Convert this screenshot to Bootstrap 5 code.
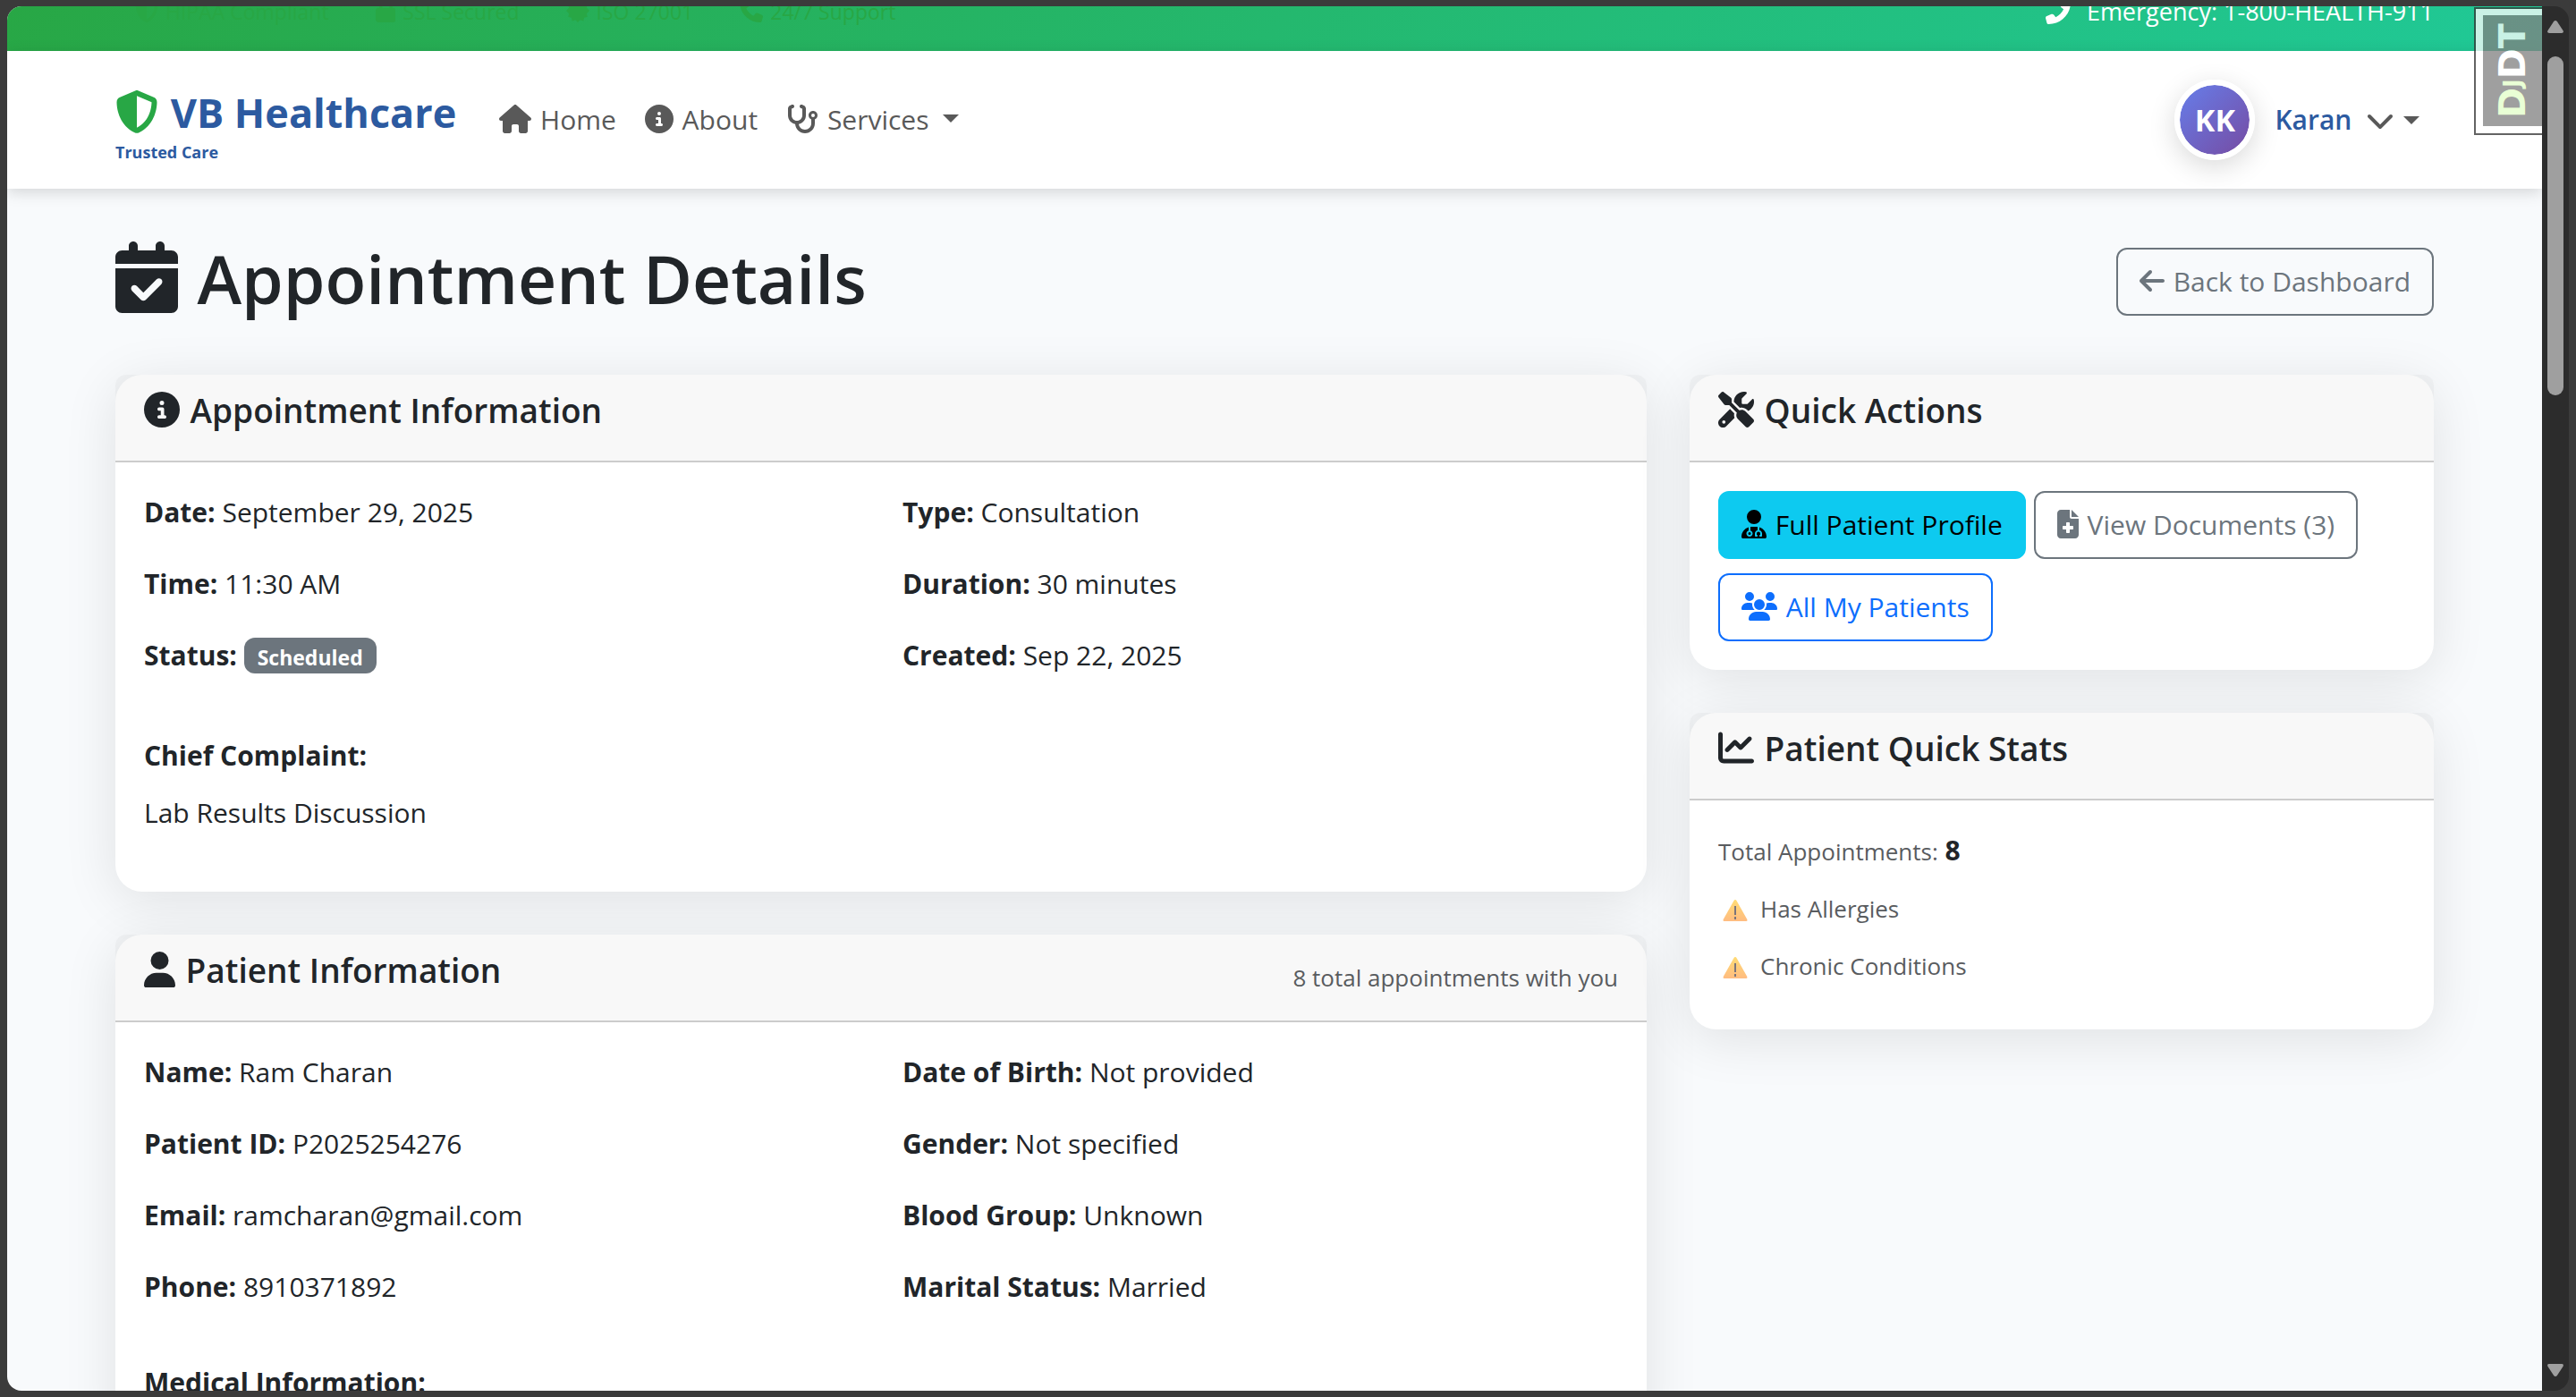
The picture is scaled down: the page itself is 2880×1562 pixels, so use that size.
<!DOCTYPE html>
<html lang="en">
<head>
<meta charset="utf-8">
<meta name="viewport" content="width=device-width, initial-scale=1">
<title>Appointment Details - VB Healthcare</title>
<link href="https://cdn.jsdelivr.net/npm/bootstrap@5.3.0/dist/css/bootstrap.min.css" rel="stylesheet">
<script src="https://cdn.jsdelivr.net/npm/bootstrap@5.3.0/dist/js/bootstrap.bundle.min.js" defer></script>
<style>
  :root { font-size: 32px; --brand-blue: #2c5aa0; --brand-green: #28a745; }
  body {
    --bs-body-font-family: "Open Sans", "Noto Sans", sans-serif;
    --bs-body-font-size: 30px;
    --bs-body-line-height: 48px;
    background: #3b3b3b;
  }
  .viewer { height: 100vh; padding: 7px 8px; }
  .page-pane { background: #f8fafc; border-radius: 16px 0 0 16px; min-width: 0; }
  .page-box { width: 100%; max-width: 2640px; margin: 0 auto; padding: 0 24px; }

  /* icons */
  .ico { fill: currentColor; flex: none; height: 32px; vertical-align: -4px; margin-right: 2px; }
  .ico-sm { height: 26px; vertical-align: -3px; }
  .ico-md { height: 28px; vertical-align: -4px; }
  .ico-lg { height: 40px; vertical-align: -5px; }
  .ico-brand { height: 48px; vertical-align: -6px; color: var(--brand-green); }
  .ico-xl { height: 80px; vertical-align: -10px; }

  /* top strip, scrolled half out of view */
  .top-strip { height: 50px; background: linear-gradient(135deg, #28a745 0%, #20c997 100%); overflow: hidden; }
  .trust-list { font-size: 23px; line-height: 40px; color: var(--brand-green); gap: 52px; padding: 0 22px 24px; }
  .emergency { font-size: 27px; line-height: 42px; padding-bottom: 23px; gap: 16px; }

  /* navigation */
  .site-nav { min-height: 154px; padding: 0; background: #fff; box-shadow: 0 4px 16px rgba(0,0,0,.15); z-index: 2; position: relative; }
  .site-nav .navbar-brand { color: var(--brand-blue); font-weight: 700; font-size: 45px; line-height: 72px; padding: 0; }
  .brand-sub { font-size: 18px; line-height: 16px; font-weight: 700; }
  .site-nav .nav-link { color: #595959; padding: 16px; font-size: 30px; }
  .avatar { width: 90px; height: 90px; border: 6px solid #fff; border-radius: 50%; color: #fff; font-weight: 700; font-size: 34px;
    background: linear-gradient(135deg, #667eea 0%, #764ba2 100%) padding-box; box-shadow: 0 8px 30px rgba(0,0,0,.15); }
  .user-name { color: var(--brand-blue); font-weight: 600; margin: 0 16px 0 22px; }

  /* headings */
  h1 { font-size: 75px; line-height: 104px; margin-bottom: 8px; }
  h5 { font-size: 37px; line-height: 48px; margin-bottom: 16px; }
  h1, h5 { font-weight: 600; }
  h6 { font-size: 30px; line-height: 38px; font-weight: 700; }

  /* cards */
  .card { --bs-card-border-radius: 30px; --bs-card-inner-border-radius: 12px; border: 0; margin-bottom: 48px; box-shadow: 0 10px 60px rgba(0,0,0,.1); }
  .card-header { border-bottom: 2px solid rgba(0,0,0,.175); }
  .card p { margin-bottom: 32px; }
  .badge { font-size: 23px; line-height: 24px; padding: 10px 15px 6px; border-radius: 12px; }
  .small-note { font-size: 26px; line-height: 42px; color: #595c5f; }
  .stats p { margin-bottom: 16px; }
  .warn-ico { width: 28px; height: 26px; margin: 0 14px 0 5px; vertical-align: -5px; opacity: .75; }
  .btn { --bs-btn-font-size: 30px; --bs-btn-line-height: 48px; --bs-btn-border-width: 2px; --bs-btn-border-radius: 12px; --bs-btn-padding-y: 12px; --bs-btn-padding-x: 24px; }
  .actions { gap: 16px 9px; }

  /* debug toolbar handle */
  .debug-handle { position: absolute; top: 1px; right: 0; z-index: 3; width: 76px; height: 143px; opacity: .76;
    border: 2px solid #333; border-right: 0; background: #fff; padding: 7px 0 8px 8px; }
  .debug-label { background: #818181; color: #fff; width: 100%; height: 100%; writing-mode: vertical-rl; transform: rotate(180deg);
    font: 700 41px/1 "DejaVu Sans", sans-serif; text-decoration: none; }
  .debug-label span { color: #e3ffc8; }
  .debug-label small { font-size: 26px; }

  /* scrollbar */
  .scroll-track { width: 30px; background: #2c2c2c; border-radius: 0 16px 16px 0; padding: 16px 6px; }
  .scroll-track svg { width: 18px; height: 14px; fill: #9f9f9f; }
  .scroll-thumb { height: 25%; margin: 26px 0 auto; border-radius: 9px; background: #9f9f9f; }
</style>
</head>
<body>
<div class="viewer d-flex">
  <div class="page-pane flex-grow-1 position-relative overflow-hidden">

    <div class="top-strip">
      <div class="page-box h-100 d-flex justify-content-between align-items-end">
        <div class="trust-list d-flex">
          <span><svg class="ico ico-sm" viewBox="0 0 512 512"><path d="M256 0c4.600 0 9.200 1 13.400 2.900L457.700 82.800c22 9.300 38.400 31 38.300 57.200c-.5 99.200-41.300 280.700-213.600 363.200c-16.700 8-36.100 8-52.800 0C57.300 420.700 16.500 239.200 16 140c-.1-26.200 16.300-47.900 38.300-57.200L242.700 2.900C246.800 1 251.400 0 256 0zm0 66.800V444.800C394 378 431.100 230.100 432 141.400L256 66.800z"/></svg> HIPAA Compliant</span>
          <span><svg class="ico ico-sm" viewBox="0 0 448 512"><path d="M144 144v48H304V144c0-44.200-35.800-80-80-80s-80 35.800-80 80zM80 192V144C80 64.500 144.500 0 224 0s144 64.500 144 144v48h16c35.300 0 64 28.700 64 64V448c0 35.300-28.700 64-64 64H64c-35.300 0-64-28.700-64-64V256c0-35.300 28.700-64 64-64H80z"/></svg> SSL Secured</span>
          <span><svg class="ico ico-sm" viewBox="0 0 512 512"><path d="M256 0l52 52 71-20 18 72 72 18-20 71 63 63-63 63 20 71-72 18-18 72-71-20-52 52-52-52-71 20-18-72-72-18 20-71L0 256l63-63-20-71 72-18 18-72 71 20z"/></svg> ISO 27001</span>
          <span><svg class="ico ico-sm" viewBox="0 0 512 512"><path d="M164.900 24.600c-7.700-18.600-28-28.500-47.400-23.200l-88 24C12.100 30.200 0 46 0 64C0 311.400 200.600 512 448 512c18 0 33.800-12.100 38.600-29.500l24-88c5.300-19.400-4.600-39.700-23.200-47.400l-96-40c-16.300-6.800-35.200-2.100-46.300 11.600L304.700 368C234.300 334.700 177.300 277.700 144 207.300L193.300 167c13.700-11.200 18.400-30 11.600-46.300l-40-96z"/></svg> 24/7 Support</span>
        </div>
        <div class="emergency d-flex align-items-center text-white">
          <svg class="ico ico-md" viewBox="0 0 512 512"><path transform="matrix(-1 0 0 1 512 0)" d="M164.900 24.600c-7.700-18.600-28-28.500-47.400-23.200l-88 24C12.100 30.200 0 46 0 64C0 311.400 200.600 512 448 512c18 0 33.800-12.100 38.600-29.500l24-88c5.300-19.400-4.600-39.700-23.200-47.400l-96-40c-16.300-6.800-35.200-2.100-46.300 11.600L304.700 368C234.300 334.700 177.300 277.700 144 207.300L193.300 167c13.700-11.200 18.400-30 11.600-46.300l-40-96z"/></svg>
          <span>Emergency: 1-800-HEALTH-911</span>
        </div>
      </div>
    </div>

    <nav class="navbar navbar-expand site-nav">
      <div class="page-box d-flex align-items-center">
        <a class="navbar-brand" href="#">
          <svg class="ico ico-brand" viewBox="0 0 512 512"><path d="M256 0c4.600 0 9.200 1 13.400 2.900L457.700 82.800c22 9.300 38.400 31 38.300 57.200c-.5 99.200-41.300 280.700-213.600 363.200c-16.700 8-36.100 8-52.800 0C57.300 420.700 16.500 239.200 16 140c-.1-26.200 16.300-47.900 38.300-57.200L242.700 2.900C246.800 1 251.400 0 256 0zm0 66.800V444.800C394 378 431.100 230.100 432 141.400L256 66.800z"/></svg> VB Healthcare
          <div class="brand-sub">Trusted Care</div>
        </a>
        <ul class="navbar-nav me-auto">
          <li class="nav-item"><a class="nav-link" href="#"><svg class="ico" viewBox="0 0 576 512"><path d="M575.800 255.500c0 18-15 32.100-32 32.100h-32l.7 160.200c0 2.700-.2 5.400-.5 8.100V472c0 22.100-17.900 40-40 40H392c-22.100 0-40-17.900-40-40V384c0-17.700-14.300-32-32-32H256c-17.700 0-32 14.300-32 32v88c0 22.100-17.900 40-40 40H104c-22.100 0-40-17.900-40-40V287.600H32c-18 0-32-14-32-32.100c0-9 3-17 10-24L266.400 8c7-7 15-8 22-8s15 2 21 7L564.800 231.500c8 7 12 15 11 24z"/></svg> Home</a></li>
          <li class="nav-item"><a class="nav-link" href="#"><svg class="ico" viewBox="0 0 512 512"><path d="M256 512A256 256 0 1 0 256 0a256 256 0 1 0 0 512zM216 336h24V272H216c-13.300 0-24-10.700-24-24s10.700-24 24-24h48c13.300 0 24 10.700 24 24v88h8c13.300 0 24 10.700 24 24s-10.700 24-24 24H216c-13.300 0-24-10.700-24-24s10.700-24 24-24zm40-208a32 32 0 1 1 0 64 32 32 0 1 1 0-64z"/></svg> About</a></li>
          <li class="nav-item dropdown"><a class="nav-link dropdown-toggle" href="#" role="button" data-bs-toggle="dropdown"><svg class="ico" viewBox="0 0 576 512"><path d="M142.400 21.900c5.600 16.800-3.500 34.900-20.200 40.500L96 71.100V192c0 53 43 96 96 96s96-43 96-96V71.100l-26.100-8.700c-16.800-5.600-25.800-23.700-20.200-40.500s23.700-25.800 40.500-20.200l26.100 8.700C334.400 19.100 352 43.500 352 71.100V192c0 77.200-54.600 141.600-127.300 156.700C231 404.600 278.400 448 336 448c61.900 0 112-50.100 112-112V265.300c-28.300-12.300-48-40.500-48-73.300c0-44.200 35.800-80 80-80s80 35.800 80 80c0 32.800-19.700 61-48 73.300V336c0 97.200-78.800 176-176 176c-92.900 0-168.900-71.900-175.500-163.100C87.200 334.200 32 269.600 32 192V71.100c0-27.500 17.600-52 43.800-60.700l26.100-8.700c16.800-5.600 34.900 3.500 40.500 20.200zM480 224a32 32 0 1 0 0-64 32 32 0 1 0 0 64z"/></svg> Services </a></li>
        </ul>
        <a class="nav-link dropdown-toggle d-flex align-items-center" href="#" role="button" data-bs-toggle="dropdown">
          <span class="avatar d-flex align-items-center justify-content-center">KK</span>
          <span class="user-name">Karan</span>
          <svg class="ico" viewBox="0 0 512 512"><path d="M233.400 406.600c12.500 12.500 32.800 12.500 45.300 0l192-192c12.500-12.500 12.500-32.800 0-45.300s-32.800-12.500-45.300 0L256 338.700 86.600 169.400c-12.500-12.500-32.800-12.500-45.300 0s-12.500 32.800 0 45.300l192 192z"/></svg>
        </a>
      </div>
    </nav>

    <main class="page-box mt-4">
      <div class="d-flex justify-content-between align-items-center mb-4">
        <h1><svg class="ico ico-xl" viewBox="0 0 448 512"><path d="M128 0c17.700 0 32 14.300 32 32V64H288V32c0-17.700 14.300-32 32-32s32 14.300 32 32V64h48c26.500 0 48 21.500 48 48v48H0V112C0 85.500 21.500 64 48 64H96V32c0-17.700 14.300-32 32-32zM0 192H448V464c0 26.500-21.500 48-48 48H48c-26.500 0-48-21.500-48-48V192zM329 305c9.400-9.400 9.400-24.600 0-33.900s-24.600-9.400-33.900 0l-95 95-47-47c-9.400-9.400-24.600-9.400-33.900 0s-9.400 24.600 0 33.900l64 64c9.400 9.400 24.600 9.400 33.900 0L329 305z"/></svg> Appointment Details</h1>
        <a class="btn btn-outline-secondary" href="#"><svg class="ico" viewBox="0 0 448 512"><path d="M9.400 233.400c-12.500 12.500-12.500 32.800 0 45.300l160 160c12.500 12.500 32.800 12.500 45.300 0s12.500-32.800 0-45.300L109.200 288 416 288c17.700 0 32-14.300 32-32s-14.300-32-32-32l-306.700 0L214.600 118.600c12.500-12.500 12.500-32.800 0-45.300s-32.800-12.500-45.300 0l-160 160z"/></svg> Back to Dashboard</a>
      </div>

      <div class="row">
        <div class="col-8">
          <section class="card">
            <div class="card-header">
              <h5><svg class="ico ico-lg" viewBox="0 0 512 512"><path d="M256 512A256 256 0 1 0 256 0a256 256 0 1 0 0 512zM216 336h24V272H216c-13.300 0-24-10.700-24-24s10.700-24 24-24h48c13.300 0 24 10.700 24 24v88h8c13.300 0 24 10.700 24 24s-10.700 24-24 24H216c-13.300 0-24-10.700-24-24s10.700-24 24-24zm40-208a32 32 0 1 1 0 64 32 32 0 1 1 0-64z"/></svg> Appointment Information</h5>
            </div>
            <div class="card-body">
              <div class="row">
                <div class="col-6">
                  <p><strong>Date:</strong> September 29, 2025</p>
                  <p><strong>Time:</strong> 11:30 AM</p>
                  <p><strong>Status:</strong> <span class="badge bg-secondary">Scheduled</span></p>
                </div>
                <div class="col-6">
                  <p><strong>Type:</strong> Consultation</p>
                  <p><strong>Duration:</strong> 30 minutes</p>
                  <p><strong>Created:</strong> Sep 22, 2025</p>
                </div>
              </div>
              <div class="mt-3">
                <strong>Chief Complaint:</strong>
                <p class="mt-2">Lab Results Discussion</p>
              </div>
            </div>
          </section>

          <section class="card">
            <div class="card-header d-flex justify-content-between align-items-center">
              <h5><svg class="ico ico-lg" viewBox="0 0 448 512"><path d="M224 256A128 128 0 1 0 224 0a128 128 0 1 0 0 256zm-45.700 48C79.800 304 0 383.800 0 482.300C0 498.700 13.300 512 29.700 512H418.300c16.400 0 29.700-13.300 29.700-29.700C448 383.800 368.200 304 269.700 304H178.300z"/></svg> Patient Information</h5>
              <span class="small-note">8 total appointments with you</span>
            </div>
            <div class="card-body">
              <div class="row">
                <div class="col-6">
                  <p><strong>Name:</strong> Ram Charan</p>
                  <p><strong>Patient ID:</strong> P2025254276</p>
                  <p><strong>Email:</strong> ramcharan@gmail.com</p>
                  <p><strong>Phone:</strong> 8910371892</p>
                </div>
                <div class="col-6">
                  <p><strong>Date of Birth:</strong> Not provided</p>
                  <p><strong>Gender:</strong> Not specified</p>
                  <p><strong>Blood Group:</strong> Unknown</p>
                  <p><strong>Marital Status:</strong> Married</p>
                </div>
              </div>
              <h6 class="mt-3">Medical Information:</h6>
            </div>
          </section>
        </div>

        <div class="col-4">
          <section class="card">
            <div class="card-header">
              <h5><svg class="ico ico-lg" viewBox="0 0 512 512"><path d="M78.600 5C69.100-2.400 55.600-1.500 47 7L7 47c-8.500 8.500-9.400 22-2.100 31.600l80 104c4.500 5.900 11.600 9.400 19 9.400h54.100l109 109c-14.700 29-10 65.400 14.300 89.600l112 112c12.500 12.500 32.800 12.500 45.300 0l64-64c12.500-12.500 12.500-32.800 0-45.300l-112-112c-24.200-24.200-60.600-29-89.600-14.300l-109-109V104c0-7.500-3.500-14.500-9.400-19L78.600 5zM19.900 396.100C7.200 408.800 0 426.100 0 444.100C0 481.600 30.400 512 67.900 512c18 0 35.300-7.200 48-19.900L233.700 374.300c-7.800-20.900-9-43.600-3.600-65.100l-61.700-61.700L19.900 396.100zM512 144c0-10.500-1.100-20.700-3.200-30.500c-2.400-11.200-16.100-14.100-24.200-6l-63.900 63.900c-3 3-7.100 4.700-11.300 4.700H352c-8.800 0-16-7.200-16-16V102.600c0-4.200 1.700-8.300 4.700-11.300l63.900-63.900c8.100-8.100 5.200-21.800-6-24.200C388.700 1.100 378.500 0 368 0C288.500 0 224 64.500 224 144l0 .8 85.300 85.300c36-9.100 75.800 .5 104 28.700L429 274.500c49-23 83-72.800 83-130.500zM56 432a24 24 0 1 1 48 0 24 24 0 1 1 -48 0z"/></svg> Quick Actions</h5>
            </div>
            <div class="card-body actions d-flex flex-wrap">
              <a class="btn btn-info" href="#"><svg class="ico" viewBox="0 0 448 512"><path d="M224 256A128 128 0 1 0 224 0a128 128 0 1 0 0 256zm-96 55.200C54 332.900 0 401.300 0 482.300C0 498.700 13.300 512 29.700 512H418.300c16.400 0 29.700-13.300 29.700-29.700c0-81-54-149.400-128-171.100V362c27.600 7.100 48 32.200 48 62v40c0 8.800-7.200 16-16 16H336c-8.800 0-16-7.200-16-16s7.200-16 16-16V424c0-17.700-14.300-32-32-32s-32 14.300-32 32v24c8.800 0 16 7.200 16 16s-7.200 16-16 16H256c-8.800 0-16-7.200-16-16V424c0-29.800 20.400-54.900 48-62V304.900c-6-.6-12.100-.9-18.300-.9H178.300c-6.200 0-12.300 .3-18.300 .9v65.400c23.100 6.900 40 28.300 40 53.700c0 30.900-25.100 56-56 56s-56-25.100-56-56c0-25.400 16.900-46.800 40-53.700V311.200zM144 448a24 24 0 1 0 0-48 24 24 0 1 0 0 48z"/></svg> Full Patient Profile</a>
              <a class="btn btn-outline-secondary" href="#"><svg class="ico" viewBox="0 0 384 512"><path d="M64 0C28.700 0 0 28.700 0 64V448c0 35.300 28.700 64 64 64H320c35.300 0 64-28.700 64-64V160H256c-17.700 0-32-14.300-32-32V0H64zM256 0V128H384L256 0zM160 240c0-8.800 7.200-16 16-16h32c8.800 0 16 7.200 16 16v48h48c8.800 0 16 7.200 16 16v32c0 8.800-7.200 16-16 16H224v48c0 8.800-7.200 16-16 16H176c-8.800 0-16-7.200-16-16V352H112c-8.800 0-16-7.200-16-16V304c0-8.800 7.200-16 16-16h48V240z"/></svg> View Documents (3)</a>
              <a class="btn btn-outline-primary" href="#"><svg class="ico" viewBox="0 0 640 512"><path d="M144 0a80 80 0 1 1 0 160A80 80 0 1 1 144 0zM512 0a80 80 0 1 1 0 160A80 80 0 1 1 512 0zM0 298.700C0 239.800 47.800 192 106.700 192h42.700c15.900 0 31 3.500 44.600 9.700c-1.300 7.200-1.900 14.700-1.900 22.300c0 38.200 16.800 72.500 43.300 96H21.300C9.600 320 0 310.400 0 298.700zM405.300 320h-.7c26.600-23.500 43.300-57.800 43.300-96c0-7.600-.7-15-1.900-22.300c13.600-6.300 28.700-9.700 44.600-9.700h42.700C592.200 192 640 239.800 640 298.700c0 11.800-9.600 21.300-21.300 21.300H405.300zM224 224a96 96 0 1 1 192 0 96 96 0 1 1 -192 0zM128 485.300C128 411.700 187.700 352 261.300 352H378.700C452.300 352 512 411.700 512 485.300c0 14.700-11.900 26.700-26.700 26.700H154.700c-14.700 0-26.700-11.900-26.700-26.700z"/></svg> All My Patients</a>
            </div>
          </section>

          <section class="card stats">
            <div class="card-header">
              <h5><svg class="ico ico-lg" viewBox="0 0 512 512"><path d="M64 64c0-17.700-14.300-32-32-32S0 46.300 0 64V400c0 44.200 35.800 80 80 80H480c17.700 0 32-14.300 32-32s-14.300-32-32-32H80c-8.800 0-16-7.200-16-16V64zm406.600 86.600c12.500-12.500 12.500-32.800 0-45.300s-32.800-12.500-45.300 0L320 210.700l-57.400-57.400c-12.500-12.500-32.800-12.500-45.300 0l-112 112c-12.500 12.500-12.500 32.800 0 45.300s32.800 12.500 45.300 0L240 221.300l57.400 57.400c12.500 12.500 32.800 12.500 45.300 0l128-128z"/></svg> Patient Quick Stats</h5>
            </div>
            <div class="card-body">
              <svg width="0" height="0" class="position-absolute"><defs><linearGradient id="amber" x1="0" y1="0" x2="0" y2="1"><stop offset="0" stop-color="#ffd047"/><stop offset="1" stop-color="#ffa657"/></linearGradient></defs></svg>
              <p><span class="small-note">Total Appointments:</span> <strong>8</strong></p>
              <p><span class="small-note"><svg class="warn-ico" viewBox="0 0 28 26"><path fill="url(#amber)" d="M14 1q1 0 1.600 1.200L27.300 23q.7 2-1 2H1.700q-1.700 0-1-2L12.400 2.200Q13 1 14 1z"/><path stroke="#4f4650" stroke-width="2" d="M14 8v10M14 20v3"/></svg>Has Allergies</span></p>
              <p><span class="small-note"><svg class="warn-ico" viewBox="0 0 28 26"><path fill="url(#amber)" d="M14 1q1 0 1.600 1.200L27.300 23q.7 2-1 2H1.700q-1.700 0-1-2L12.400 2.200Q13 1 14 1z"/><path stroke="#4f4650" stroke-width="2" d="M14 8v10M14 20v3"/></svg>Chronic Conditions</span></p>
            </div>
          </section>
        </div>
      </div>
    </main>

    <div class="debug-handle"><a class="debug-label d-flex align-items-center justify-content-center" href="#"><div><span>D<small>J</small></span>DT</div></a></div>
  </div>

  <div class="scroll-track d-flex flex-column">
    <svg viewBox="0 0 18 14"><path d="M9 0q1.200 0 2 1.200l6.600 10Q18.600 14 16 14H2q-2.600 0-1.600-2.800L7 1.200Q7.800 0 9 0z"/></svg>
    <div class="scroll-thumb"></div>
    <svg viewBox="0 0 18 14"><path d="M9 14q1.200 0 2-1.200l6.600-10Q18.600 0 16 0H2Q-.6 0 .4 2.800l6.600 10Q7.800 14 9 14z"/></svg>
  </div>
</div>
</body>
</html>
